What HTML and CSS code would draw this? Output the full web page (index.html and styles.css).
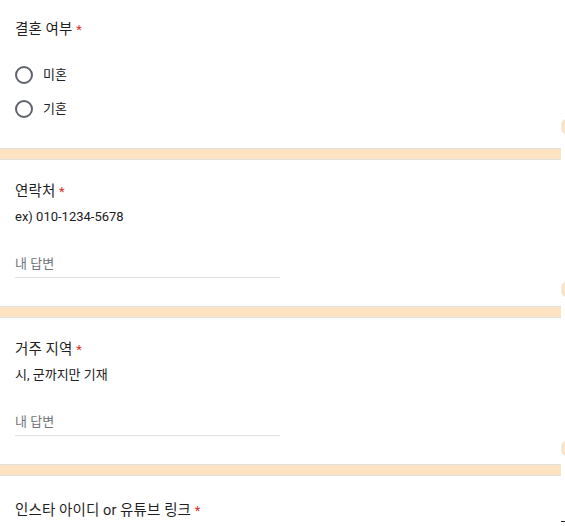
FILE: index.html
```html
<!DOCTYPE html>
<html lang="ko">
<head>
<meta charset="utf-8">
<link rel="stylesheet" href="styles.css">
</head>
<body>
<div class="page">
  <div class="form">
    <section class="card card-first">
      <div class="title">결혼 여부 <span class="req">*</span></div>
      <div class="options">
        <label class="option"><span class="radio"></span><span class="opt-text">미혼</span></label>
        <label class="option"><span class="radio"></span><span class="opt-text">기혼</span></label>
      </div>
    </section>
    <section class="card">
      <div class="title">연락처 <span class="req">*</span></div>
      <div class="desc">ex) 010-1234-5678</div>
      <div class="answer">내 답변</div>
    </section>
    <section class="card">
      <div class="title">거주 지역 <span class="req">*</span></div>
      <div class="desc">시, 군까지만 기재</div>
      <div class="answer">내 답변</div>
    </section>
    <section class="card card-last">
      <div class="title">인스타 아이디 or 유튜브 링크 <span class="req">*</span></div>
    </section>
  </div>
  <div class="side">
    <span class="tab tab1"></span>
    <span class="tab tab2"></span>
    <span class="tab tab3"></span>
    <span class="dash"></span>
  </div>
</div>
</body>
</html>
```
FILE: styles.css
```css
* { box-sizing: border-box; }
html, body { margin: 0; padding: 0; background: #fff; }
body {
  font-family: Roboto, "Noto Sans CJK KR", sans-serif;
  color: #202124;
  width: 565px;
  height: 526px;
  overflow: hidden;
}
.page {
  display: flex;
  align-items: flex-start;
  position: relative;
  height: 526px;
  overflow: hidden;
}
.form {
  width: 561px;
  background: #fde3c1;
  display: flex;
  flex-direction: column;
  gap: 10px;
  margin-top: -1px;
}
.card {
  background: #fff;
  border-top: 1px solid #e0e0e0;
  border-bottom: 1px solid #e0e0e0;
  padding: 24px 15px 28px;
  display: flex;
  flex-direction: column;
}
.card-first {
  border-top: none;
  padding-top: 23px;
  padding-bottom: 29px;
}
.card-last { padding-top: 27px; padding-bottom: 20px; }
.title {
  font-size: 14.5px;
  line-height: 16px;
  font-weight: 400;
  letter-spacing: 0.1px;
  color: #1f1f1f;
}
.req { color: #d93025; font-size: 13px; }
.desc {
  font-size: 13px;
  line-height: 20px;
  margin-top: 7px;
}
.answer {
  width: 265px;
  font-size: 13px;
  line-height: 20px;
  color: #70757a;
  margin-top: 27px;
  padding-bottom: 3px;
  border-bottom: 1px solid #e0e0e0;
}
.options {
  display: flex;
  flex-direction: column;
  gap: 14px;
  margin-top: 27px;
}
.option {
  display: flex;
  align-items: center;
  gap: 10px;
  height: 20px;
}
.radio {
  width: 18px;
  height: 18px;
  border: 2px solid #5f6368;
  border-radius: 50%;
  flex: none;
}
.opt-text { font-size: 13px; line-height: 20px; }
.side {
  flex: 1;
  position: relative;
  height: 526px;
}
.tab {
  position: absolute;
  left: 0;
  width: 8px;
  height: 15px;
  background: #fde3c1;
  border: 1px solid #ececec;
  border-radius: 5px 0 0 5px;
}
.tab1 { top: 119px; }
.tab2 { top: 282px; }
.tab3 { top: 441px; }
.dash {
  position: absolute;
  left: 0;
  top: 521px;
  width: 4px;
  height: 1px;
  background: #202124;
}
```
